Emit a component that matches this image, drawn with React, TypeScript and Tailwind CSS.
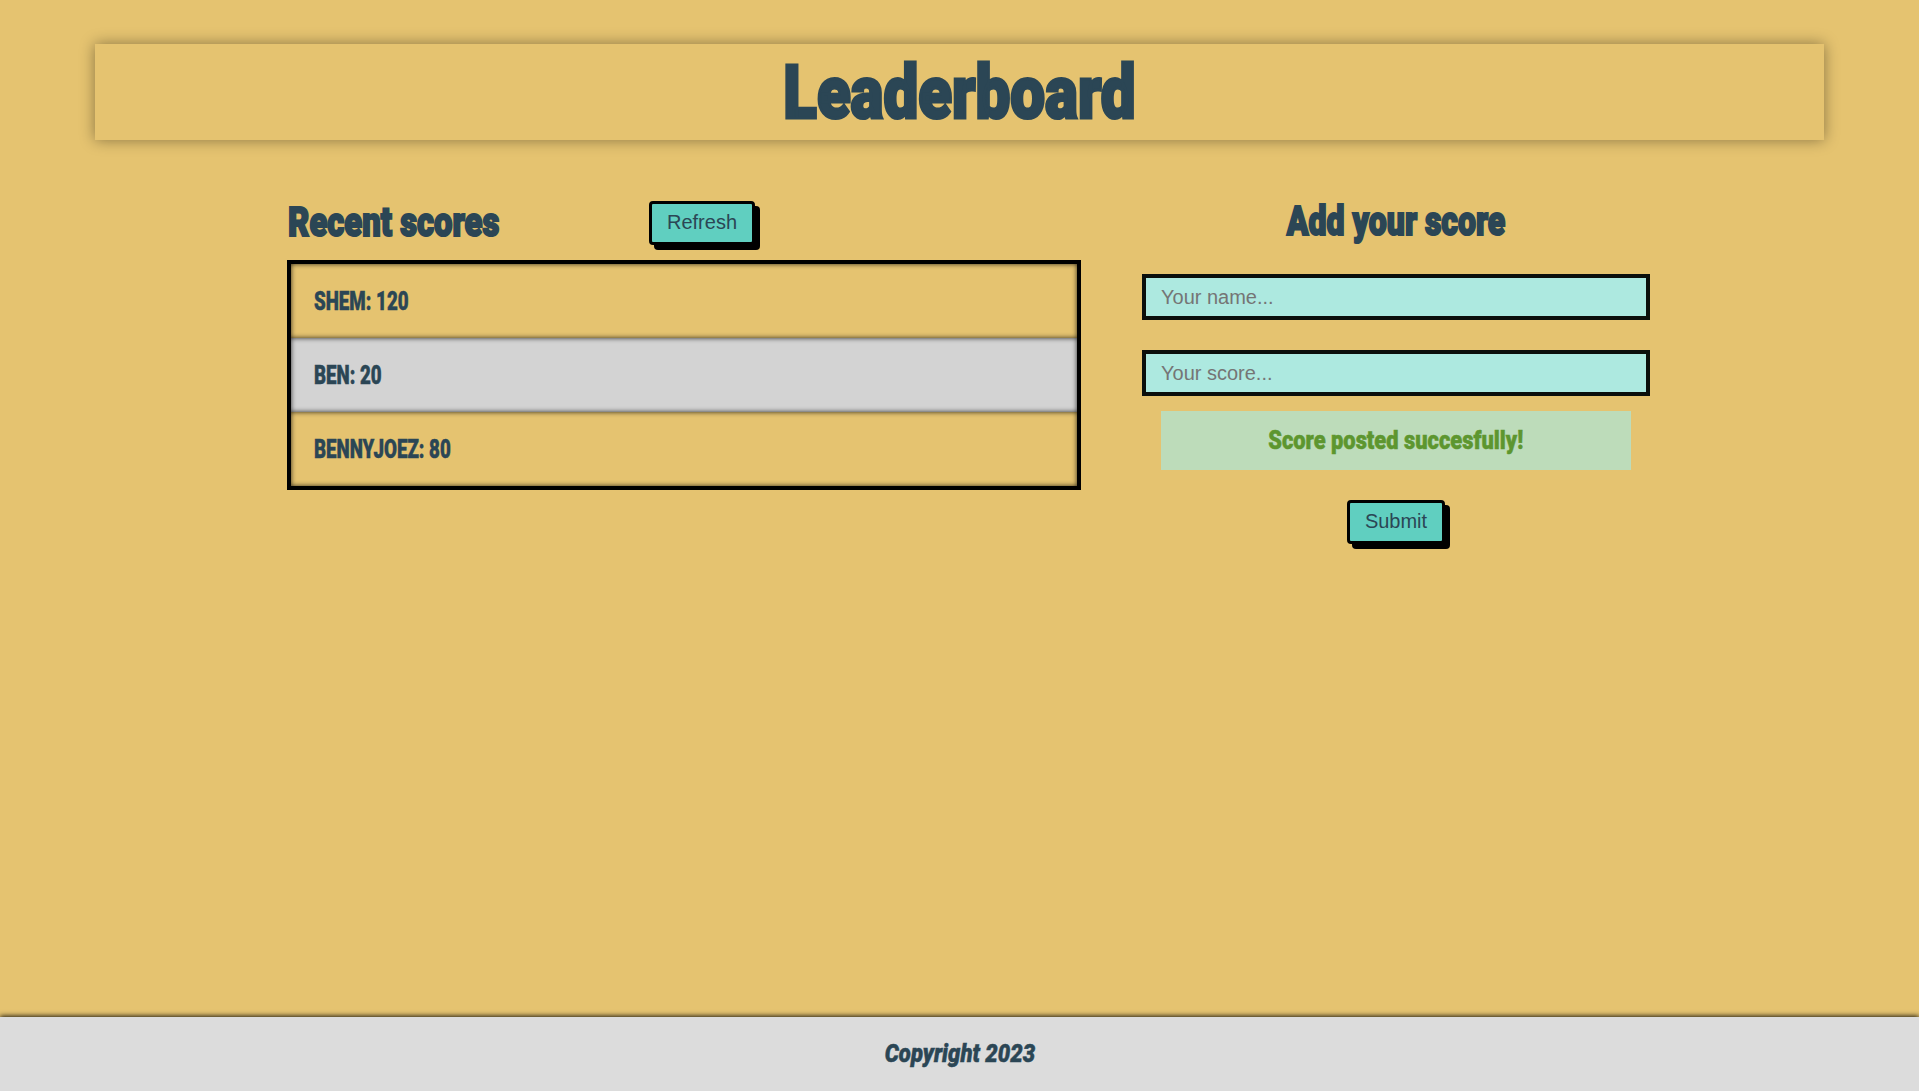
import React from 'react';

const scores = [
  { name: 'SHEM', score: 120, bg: 'bg-[#e5c370]' },
  { name: 'BEN', score: 20, bg: 'bg-[#d3d3d3]' },
  { name: 'BENNYJOEZ', score: 80, bg: 'bg-[#e5c370]' },
];

// Impact isn't installed, so Roboto Black gets squeezed to its proportions
const impact = "font-['Impact','Roboto',sans-serif] font-black";

export default function App() {
  return (
    <div className="flex min-h-[1091px] flex-col bg-[#e5c370] font-['Liberation_Sans',sans-serif] text-[#2b4655]">
      <header className="mx-[95px] mt-[44px] flex h-[96px] items-center justify-center bg-[#e5c370] shadow-[0_0_14px_rgba(0,0,0,0.4)]">
        <h1 className={`${impact} inline-block scale-x-[0.825] whitespace-nowrap text-[75px] leading-none [-webkit-text-stroke:3px_#2b4655]`}>Leaderboard</h1>
      </header>

      <main className="ml-[287px] mt-[60px] flex flex-1 gap-[61px]">
        <section className="w-[794px]">
          <div className="flex h-[60px] items-start">
            <h2 className={`${impact} mt-[2px] w-[362px] origin-left translate-x-px scale-x-[0.8] whitespace-nowrap text-[41px] leading-[40px] [-webkit-text-stroke:2px_#2b4655]`}>Recent scores</h2>
            <button className="mt-px h-[44px] w-[106px] rounded-[4px] border-[3px] border-black bg-[#60cfc0] pb-[2px] text-[20px] shadow-[5px_5px_0_#000]">Refresh</button>
          </div>
          <ul className="border-4 border-black">
            {scores.map((s) => (
              <li key={s.name} className={`flex h-[74px] items-center pl-[22px] shadow-[inset_0_0_5px_rgba(0,0,0,0.8)] ${s.bg}`}>
                <span className={`${impact} inline-block origin-left translate-x-px scale-x-[0.72] whitespace-nowrap text-[26px] [-webkit-text-stroke:0.5px_#2b4655]`}>{s.name}: {s.score}</span>
              </li>
            ))}
          </ul>
        </section>

        <section className="flex w-[508px] flex-col items-center">
          <h2 className={`${impact} h-[74px] scale-x-[0.78] whitespace-nowrap pt-px text-[41px] leading-[40px] [-webkit-text-stroke:2px_#2b4655]`}>Add your score</h2>
          <input className="h-[46px] w-full border-4 border-[#0b0f0c] bg-[#ade9e0] px-[15px] text-[20px] outline-none placeholder:text-[#757575]" placeholder="Your name..." />
          <input className="mt-[30px] h-[46px] w-full border-4 border-[#0b0f0c] bg-[#ade9e0] px-[15px] text-[20px] outline-none placeholder:text-[#757575]" placeholder="Your score..." />
          <div className="mt-[15px] flex h-[59px] w-[470px] items-center justify-center bg-[#bddcba]">
            <p className={`${impact} inline-block scale-x-[0.875] whitespace-nowrap text-[25px] text-[#5d962f] [-webkit-text-stroke:0.5px_#5d962f]`}>Score posted succesfully!</p>
          </div>
          <button className="mt-[30px] h-[44px] w-[98px] rounded-[4px] border-[3px] border-black bg-[#60cfc0] pb-[2px] text-[20px] shadow-[5px_5px_0_#000]">Submit</button>
        </section>
      </main>

      <footer className="flex h-[74px] items-center justify-center bg-[#dcdcdc] shadow-[0_-1px_5px_rgba(0,0,0,0.9)]">
        <span className={`${impact} inline-block scale-x-[0.885] whitespace-nowrap text-[25px] italic [-webkit-text-stroke:0.5px_#2b4655]`}>Copyright 2023</span>
      </footer>
    </div>
  );
}
